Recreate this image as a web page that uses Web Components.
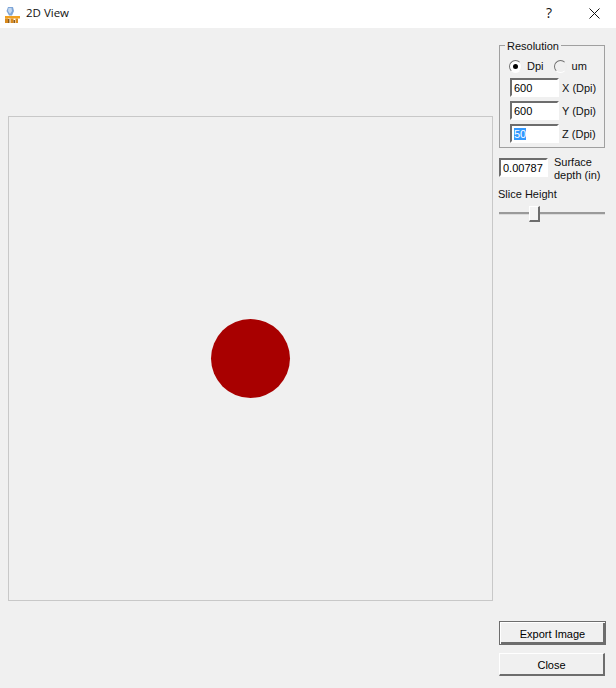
<!DOCTYPE html>
<html>
<head>
<meta charset="utf-8">
<title>2D View</title>
<style>
html, body { margin:0; padding:0; background:#f0f0f0; }
body { font-family:"Liberation Sans", Arial, sans-serif; font-size:11px; color:#000; }
</style>
</head>
<body>
<view-window>
	<title-bar slot="title">2D View</title-bar>
	<view-canvas slot="canvas"></view-canvas>
	<resolution-box slot="side"></resolution-box>
	<depth-field slot="side"></depth-field>
	<slice-slider slot="side"></slice-slider>
	<span slot="side" style="flex:1"></span>
	<win-button slot="side" primary>Export Image</win-button>
	<win-button slot="side">Close</win-button>
</view-window>

<template id="view-window-tpl">
	<style>
	:host { display:grid; grid-template-columns:499px 117px; grid-template-rows:28px 660px; width:616px; height:688px; background:#f0f0f0; }
	.title { grid-column:1 / 3; width:616px; }
	.left { display:flex; align-items:center; padding-left:8px; }
	.side { display:flex; flex-direction:column; padding:17px 0 12px; box-sizing:border-box; height:660px; width:107px; }
	</style>
	<div class="title"><slot name="title"></slot></div>
	<div class="left"><slot name="canvas"></slot></div>
	<div class="side"><slot name="side"></slot></div>
</template>

<template id="title-bar-tpl">
	<style>
	:host { display:flex; align-items:center; height:28px; background:#fff; font-family:"Open Sans", "Noto Sans", sans-serif; font-size:11.5px; color:#111; }
	svg { display:block; }
	.icon { margin:3px 0 0 5px; width:15px; height:17px; }
	.txt { margin-left:6px; flex:1; position:relative; top:-2px; }
	.btn { height:28px; display:flex; align-items:center; justify-content:center; }
	.help { width:46px; font-size:14px; position:relative; top:-2px; }
	.close { width:44px; position:relative; top:-1px; }
	</style>
	<svg class="icon" viewBox="0 0 15 17">
		<path d="M3 0h5l1 4-2 4.500H4L1.500 4z" fill="#7fa6d8"/>
		<path d="M3.500 1h3l.5 3-2 3-2-3z" fill="#c3d8f0"/>
		<path d="M0 9h15v2.500H0z" fill="#f0a020"/>
		<path d="M0 11.500h3V16H0zM5.500 11.500h3V16h-3zM10.500 11.500H13V16h-2.500z" fill="#d98a1c"/>
		<path d="M3 12h1.500v4H3zM8.500 13H10v3H8.500z" fill="#8a5a1c"/>
	</svg>
	<span class="txt"><slot></slot></span>
	<span class="btn help">?</span>
	<span class="btn close">
		<svg width="11" height="11" viewBox="0 0 11 11"><path d="M.5.5l10 10M10.500.5l-10 10" stroke="#111" stroke-width="1" fill="none"/></svg>
	</span>
</template>

<template id="view-canvas-tpl">
	<style>
	:host { display:flex; align-items:center; justify-content:center; width:485px; height:485px; box-sizing:border-box; border:1px solid #c8c8c8; background:#f0f0f0; }
	.dot { width:79px; height:79px; border-radius:50%; background:#a80000; }
	</style>
	<div class="dot"></div>
</template>

<template id="sunken-field-tpl">
	<style>
	:host { display:block; width:49px; height:19px; flex:none; box-sizing:border-box; border:2px solid; border-color:#6d6d6d #fff #fff #6d6d6d; background:#fff; font-size:11px; line-height:15px; padding:1px 0 0 2px; color:#000; white-space:nowrap; overflow:hidden; }
	</style>
	<slot></slot>
</template>

<template id="resolution-box-tpl">
	<style>
	:host { display:block; position:relative; width:106px; height:103px; box-sizing:border-box; font-size:11px; border:1px solid #a0a0a0; padding:12px 0 0 10px; color:#111; }
	.legend { position:absolute; left:5px; top:-6px; padding:0 2px; line-height:12px; background:#f0f0f0; }
	.radios { display:flex; align-items:center; height:16px; }
	.row { display:flex; align-items:center; gap:3px; height:19px; margin-top:4px; }
	.dot { width:13px; height:13px; box-sizing:border-box; border-radius:50%; border:1px solid; border-color:#707070 #eee #fff #707070; background:#fff; display:flex; align-items:center; justify-content:center; margin-left:-1px; margin-right:5px; }
	.dot i { display:block; width:5px; height:5px; border-radius:50%; background:#000; }
	.dot.off { background:#f0f0f0; margin-left:10px; margin-right:5px; }
	</style>
	<div class="legend">Resolution</div>
	<div class="radios"><span class="dot"><i></i></span><span>Dpi</span><span class="dot off"></span><span>um</span></div>
	<div class="row"><sunken-field>600</sunken-field><span>X (Dpi)</span></div>
	<div class="row"><sunken-field>600</sunken-field><span>Y (Dpi)</span></div>
	<div class="row"><sunken-field><span style="background:#3399ff;color:#fff">50</span></sunken-field><span>Z (Dpi)</span></div>
</template>

<template id="depth-field-tpl">
	<style>
	:host { display:flex; gap:6px; margin-top:10px; height:29px; font-size:11px; line-height:13px; color:#111; }
	.lbl { margin-top:-2px; white-space:nowrap; }
	</style>
	<sunken-field>0.00787</sunken-field>
	<span class="lbl">Surface<br>depth (in)</span>
</template>

<template id="slice-slider-tpl">
	<style>
	:host { display:block; font-size:11px; color:#111; width:106px; }
	.cap { line-height:14px; margin-left:-1px; }
	.track { display:flex; align-items:flex-start; height:16px; margin-top:5px; }
	.line { height:3px; margin-top:6px; background:#9a9a9a; border-bottom:1px solid #dcdcdc; box-sizing:border-box; }
	.a { width:30px; }
	.b { flex:1; }
	.thumb { width:11px; height:16px; box-sizing:border-box; border:1px solid; border-width:1px 2px 2px 1px; border-color:#fff #6d6d6d #6d6d6d #fff; background:#f4f4f4; }
	</style>
	<div class="cap">Slice Height</div>
	<div class="track"><span class="line a"></span><span class="thumb"></span><span class="line b"></span></div>
</template>

<template id="win-button-tpl">
	<style>
	:host { display:flex; align-items:center; justify-content:center; width:106px; height:23px; box-sizing:border-box; font-size:11px; color:#000; background:#f0f0f0; border:1px solid; border-color:#fff #6d6d6d #6d6d6d #fff; border-width:1px 2px 2px 1px; margin-top:8px; padding-top:1px; }
	:host([primary]) { width:107px; height:24px; border:1px solid #6d6d6d; box-shadow:inset 1px 1px 0 #fff, inset -2px -2px 0 #6d6d6d; margin-top:0; }
	</style>
	<slot></slot>
</template>

<script>
// same boilerplate for every element: clone its template into an open shadow root
function defineFromTemplate(name) {
	const template = document.getElementById(name + '-tpl');
	customElements.define(name, class extends HTMLElement {
		constructor() {
			super();
			let shadowRoot = this.attachShadow({mode: 'open'});
			shadowRoot.appendChild(template.content.cloneNode(true));
		}
	});
}
['sunken-field', 'view-window', 'title-bar', 'view-canvas', 'resolution-box', 'depth-field', 'slice-slider', 'win-button'].forEach(defineFromTemplate);
</script>
</body>
</html>
